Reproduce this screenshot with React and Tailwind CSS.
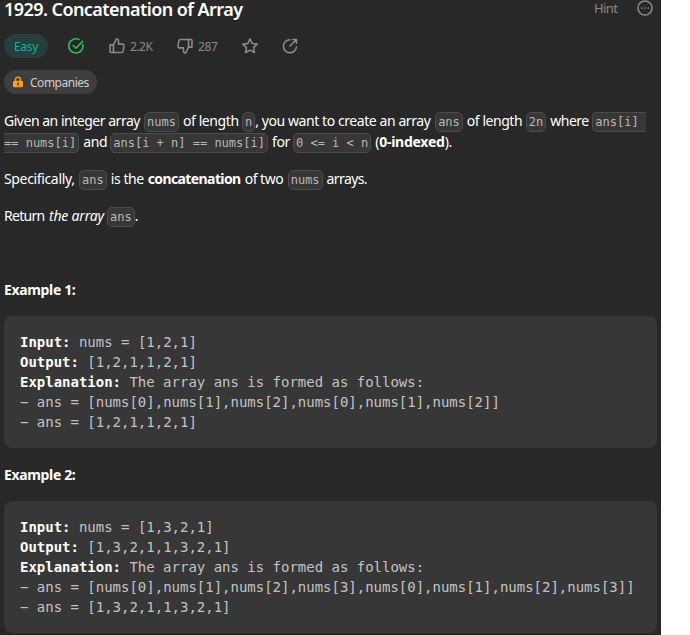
function Code({ children, className = '' }) {
  return (
    <code
      className={`inline-block h-5 rounded-[5px] border border-[#4c4c4c] bg-[#373737] px-[2px] pt-px font-['DejaVu_Sans_Mono',monospace] text-[12px] leading-4 tracking-normal text-[#b8b8b8] ${className}`}
    >
      {children}
    </code>
  );
}

function Text({ children, className = '' }) {
  return <span className={`inline-block shrink-0 whitespace-pre ${className}`}>{children}</span>;
}

function Line({ children }) {
  return <div className="flex h-[21px] items-baseline whitespace-pre">{children}</div>;
}

function Example({ input, output, steps }) {
  return (
    <pre className="mr-1 h-[132px] rounded-lg bg-[#373737] p-4 font-['DejaVu_Sans_Mono',monospace] text-[14px] leading-5 tracking-[-0.01px] text-[#c3c3c3]">
      <b className="text-white">Input:</b> nums = {input}{'\n'}
      <b className="text-white">Output:</b> {output}{'\n'}
      <b className="text-white">Explanation:</b> The array ans is formed as follows:{'\n'}
      − ans = {steps}{'\n'}
      − ans = {output}
    </pre>
  );
}

function Stroke({ children, className = '', width = 2.1 }) {
  return (
    <svg
      viewBox="0 0 24 24"
      fill="none"
      stroke="currentColor"
      strokeWidth={width}
      strokeLinecap="round"
      strokeLinejoin="round"
      className={`h-[18px] w-[18px] shrink-0 ${className}`}
    >
      {children}
    </svg>
  );
}

export default function App() {
  return (
    <div className="min-h-screen bg-white">
      <main className="h-[635px] w-[661px] overflow-hidden bg-[#282828] pl-1 font-['Noto_Sans',sans-serif] text-[14px] leading-[21px] text-white">
        <header className="flex h-[34px] items-start">
          <h1 className="w-[590px] whitespace-nowrap text-[18px] font-semibold leading-[18px] tracking-[-0.56px]">
            1929. Concatenation of Array
          </h1>
          <span className="-mt-[2px] w-[42px] text-[13px] leading-5 tracking-[-0.6px] text-[#8a8a8a]">Hint</span>
          <Stroke className="-mt-px text-[#8a8a8a]">
            <circle cx="12" cy="12" r="9.4" />
            <path d="M7.6 12h.01M12 12h.01M16.4 12h.01" strokeWidth="2.3" />
          </Stroke>
        </header>

        <div className="flex h-6 items-center text-[12px] text-[#8a8a8a]">
          <span className="flex h-6 w-11 items-center justify-center rounded-full bg-[#263f3c] tracking-[-0.3px] text-[#00b8a3]">
            Easy
          </span>
          <Stroke className="ml-[19px] text-[#2cbb5d]" width={2.2}>
            <path d="M21.2 10.3a9.5 9.5 0 1 1-5.3-7" />
            <path d="m8.2 11.3 3.7 3.7L20.8 5.8" />
          </Stroke>
          <Stroke className="ml-[23px]">
            <path d="M2.7 10.5h4.6v10.2H3.7a1 1 0 0 1-1-1Z" />
            <path d="M7.3 10.5 11 2.7c2 0 3 1.1 3 2.8v4h5.2c1.5 0 2.3 1 2.1 2.4l-1.1 6.8c-.2 1.3-1 2-2.3 2H7.3" />
          </Stroke>
          <span className="ml-[4px] w-[24px] whitespace-nowrap tracking-[-0.5px]">2.2K</span>
          <Stroke className="ml-[22px]">
            <path d="M21.3 13.5h-4.6V3.3h3.6a1 1 0 0 1 1 1Z" />
            <path d="M16.7 13.5 13 21.3c-2 0-3-1.1-3-2.8v-4H4.8c-1.5 0-2.3-1-2.1-2.4l1.1-6.8c.2-1.3 1-2 2.3-2h10.6" />
          </Stroke>
          <span className="ml-[4px] w-[19px] whitespace-nowrap tracking-[-0.4px]">287</span>
          <Stroke className="ml-[24px]">
            <path d="m12 2.6 2.9 6 6.6.9-4.8 4.6 1.2 6.6-5.9-3.2-5.9 3.2 1.2-6.6-4.8-4.6 6.6-.9Z" />
          </Stroke>
          <Stroke className="ml-[22px]">
            <path d="M12 3.7a8.7 8.7 0 1 0 8.6 9.2" />
            <path d="M12 12 20 4M15.6 3.4h5v5" />
          </Stroke>
        </div>

        <div className="mt-3 flex h-6 w-[93px] items-center rounded-full bg-[#3e3e3e] pl-[8px] text-[12px] text-[#cfcfcf]">
          <svg viewBox="0 0 12 12" className="h-3 w-3">
            <path d="M3.5 5V3.6a2.5 2.5 0 0 1 5 0V5" fill="none" stroke="#ffa116" strokeWidth="1.4" />
            <rect x="1" y="4.7" width="10" height="6.6" rx="1.5" fill="#ffa116" />
            <path d="M6 7v2" stroke="#4b3a20" strokeWidth="1.5" strokeLinecap="round" />
          </svg>
          <span className="ml-[6px] tracking-[-0.48px]">Companies</span>
        </div>

        <section className="mt-4">
          <Line>
            <Text className="w-[140px] tracking-[-0.48px]">Given an integer array </Text>
            <Code>nums</Code>
            <Text className="w-[63px] pl-[4px] tracking-[-0.4px]">of length </Text>
            <Code>n</Code>
            <Text className="w-[180px] tracking-[-0.42px]">, you want to create an array </Text>
            <Code>ans</Code>
            <Text className="w-[63px] pl-[4px] tracking-[-0.45px]">of length </Text>
            <Code>2n</Code>
            <Text className="w-[46px] pl-[4px] tracking-[-0.5px]">where </Text>
            <Code className="w-[54px] rounded-r-none border-r-0">ans[i]</Code>
          </Line>
          <Line>
            <Code className="rounded-l-none border-l-0 pl-0">== nums[i]</Code>
            <Text className="w-[31px] pl-[4px] tracking-[-0.4px]">and</Text>
            <Code>ans[i + n] == nums[i]</Code>
            <Text className="w-[25px] pl-[4px] tracking-[-0.4px]">for</Text>
            <Code>0 &lt;= i &lt; n</Code>
            <Text className="pl-[4px] tracking-[-0.25px]">(<b>0-indexed</b>).</Text>
          </Line>
        </section>

        <section className="mt-4">
          <Line>
            <Text className="w-[75px] tracking-[-0.35px]">Specifically, </Text>
            <Code>ans</Code>
            <Text className="w-[41px] pl-[4px] tracking-[-0.4px]">is the </Text>
            <Text className="w-[97px] font-bold tracking-[-0.6px]">concatenation</Text>
            <Text className="w-[43px] tracking-[-0.5px]">of two </Text>
            <Code>nums</Code>
            <Text className="pl-[4px] tracking-[-0.6px]">arrays.</Text>
          </Line>
        </section>

        <section className="mt-4">
          <Line>
            <Text className="w-[45px] tracking-[-0.7px]">Return </Text>
            <Text className="w-[58px] italic tracking-[-0.2px]">the array</Text>
            <Code>ans</Code>
            <Text>.</Text>
          </Line>
        </section>

        <h2 className="mb-4 mt-[53px] text-[14px] font-bold leading-[21px] tracking-[-0.35px]">Example 1:</h2>
        <Example
          input="[1,2,1]"
          output="[1,2,1,1,2,1]"
          steps="[nums[0],nums[1],nums[2],nums[0],nums[1],nums[2]]"
        />
        <h2 className="my-4 text-[14px] font-bold leading-[21px] tracking-[-0.35px]">Example 2:</h2>
        <Example
          input="[1,3,2,1]"
          output="[1,3,2,1,1,3,2,1]"
          steps="[nums[0],nums[1],nums[2],nums[3],nums[0],nums[1],nums[2],nums[3]]"
        />
      </main>
    </div>
  );
}
